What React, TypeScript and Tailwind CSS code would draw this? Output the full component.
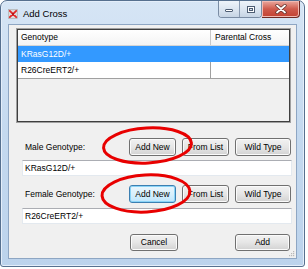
import React from "react";

const font = { fontFamily: '"Liberation Sans", Arial, sans-serif' };

function Btn({ label, w, focus = false }: { label: string; w: string; focus?: boolean }) {
  return (
    <div
      className={
        "flex items-center justify-center rounded-[3px] border text-[8.5px] text-black " +
        w +
        (focus
          ? " border-[#3c7fb1] bg-gradient-to-b from-[#eaf6fd] via-[#d9f0fc] to-[#bee6fd] shadow-[inset_0_0_0_1px_#8ad4f7]"
          : " border-[#707070] bg-gradient-to-b from-[#f2f2f2] via-[#e6e6e6] to-[#d2d2d2] shadow-[inset_0_0_0_1px_#fbfbfb]")
      }
    >
      {label}
    </div>
  );
}

function ButtonRow({ label }: { label: string }) {
  return (
    <div className="flex h-[18px] items-center pl-[16px] pr-[5px]">
      <div className="flex-1 text-[8.5px] text-black">{label}</div>
      <div className="flex gap-[6px] h-full">
        <Btn label="Add New" w="w-[47px]" focus={label.startsWith("Female")} />
        <Btn label="From List" w="w-[47px]" />
        <Btn label="Wild Type" w="w-[56px]" />
      </div>
    </div>
  );
}

function TextBox({ value }: { value: string }) {
  return (
    <div className="ml-[13px] flex h-[16px] w-[270px] items-center border border-[#e3e9ef] border-t-[#abadb3] bg-white pl-[2px] text-[8.5px] text-black">
      {value}
    </div>
  );
}

export default function App() {
  return (
    <div className="relative h-[269px] w-[308px] overflow-hidden bg-white" style={font}>
      <div className="flex h-[267px] w-[305px] flex-col rounded-t-[7px] rounded-b-[3px] border border-[#56708f] bg-gradient-to-b from-[#d6e5f5] via-[#c4d9ef] to-[#bcd3ec] shadow-[inset_0_0_0_1px_#e4eefa]">
        {/* title bar */}
        <div className="flex h-[23px] items-start justify-between">
          <div className="flex items-center gap-[5px] pl-[7px] pt-[6px]">
            <svg width="10" height="10" viewBox="0 0 10 10">
              <rect x="0.5" y="0.5" width="9" height="9" fill="#dcdcdc" stroke="#a8a8a8" strokeWidth="0.6" />
              <path d="M1.8 1.8 L8.2 8.2 M8.2 1.8 L1.8 8.2" stroke="#e02828" strokeWidth="1.8" strokeLinecap="round" />
              <circle cx="5" cy="5" r="1.1" fill="#b01010" />
            </svg>
            <span className="text-[9.5px] text-black">Add Cross</span>
          </div>
          <div className="flex pr-[4px]">
            <div className="flex h-[17px] overflow-hidden rounded-b-[4px] border border-t-0 border-[#7a8ca4] shadow-[inset_0_0_0_1px_#eef4fb]">
              <div className="flex w-[21px] items-end justify-center border-r border-[#8a9bb2] bg-gradient-to-b from-[#eef4fa] via-[#dce6f1] to-[#c6d4e4] pb-[5px]">
                <div className="h-[3px] w-[8px] rounded-[1px] border border-[#4d5d73] bg-white" />
              </div>
              <div className="flex w-[21px] items-center justify-center bg-gradient-to-b from-[#eef4fa] via-[#dce6f1] to-[#c6d4e4]">
                <div className="h-[7px] w-[8px] border border-[#4d5d73] bg-white">
                  <div className="mx-auto mt-[1px] h-[3px] w-[4px] border border-[#4d5d73] bg-[#d8e3ef]" />
                </div>
              </div>
            </div>
            <div className="flex h-[17px] w-[38px] items-center justify-center rounded-br-[4px] border border-l-0 border-t-0 border-[#6e2a24] bg-gradient-to-b from-[#e9a89f] via-[#cf5a4c] to-[#c24132] shadow-[inset_0_0_0_1px_#f2b9b1]">
              <svg width="12" height="10" viewBox="0 0 12 10">
                <path d="M2 1.5 L10 8.5 M10 1.5 L2 8.5" stroke="#5a2a25" strokeWidth="3.2" strokeLinecap="round" />
                <path d="M2 1.5 L10 8.5 M10 1.5 L2 8.5" stroke="#ffffff" strokeWidth="1.8" strokeLinecap="round" />
              </svg>
            </div>
          </div>
        </div>

        {/* client area */}
        <div className="relative mx-[7px] mb-[7px] flex flex-1 flex-col border border-[#8ea6c3] bg-[#f0f0f0]">
          {/* grid */}
          <div className="ml-[7px] mt-[3px] h-[95px] w-[275px] border border-[#a0a0a0]">
            <div className="flex h-full flex-col border border-[#3f3f3f] bg-[#f0f0f0]">
              <div className="flex h-[16px] border-b border-[#d5d5d5] bg-gradient-to-b from-white to-[#f4f4f4] text-[8.5px] text-black">
                <div className="flex w-[193px] items-center border-r border-[#c8c8c8] pl-[3px]">Genotype</div>
                <div className="flex flex-1 items-center pl-[4px]">Parental Cross</div>
              </div>
              <div className="flex h-[16px] bg-[#3399ff] text-[8.5px] text-white">
                <div className="flex w-[193px] items-center border-r border-[#3399ff] pl-[3px]">KRasG12D/+</div>
                <div className="flex-1" />
              </div>
              <div className="flex h-[17px] border-b border-[#a0a0a0] bg-white text-[8.5px] text-black">
                <div className="flex w-[193px] items-center border-r border-[#a0a0a0] pl-[3px]">R26CreERT2/+</div>
                <div className="flex-1" />
              </div>
            </div>
          </div>

          <div className="mt-[15px]">
            <ButtonRow label="Male Genotype:" />
          </div>
          <div className="mt-[4px]">
            <TextBox value="KRasG12D/+" />
          </div>
          <div className="mt-[9px]">
            <ButtonRow label="Female Genotype:" />
          </div>
          <div className="mt-[5px]">
            <TextBox value="R26CreERT2/+" />
          </div>
          <div className="mt-[10px] flex h-[17px] justify-end gap-[57px] pr-[6px]">
            <Btn label="Cancel" w="w-[48px]" />
            <Btn label="Add" w="w-[55px]" />
          </div>

          <svg className="absolute bottom-[1px] right-[1px]" width="8" height="8" viewBox="0 0 8 8">
            {[
              [6, 2],
              [6, 4],
              [4, 4],
              [6, 6],
              [4, 6],
              [2, 6],
            ].map(([x, y], i) => (
              <rect key={i} x={x} y={y} width="1.2" height="1.2" fill="#b8b8b8" />
            ))}
          </svg>
        </div>
      </div>

      {/* red annotation ellipses */}
      <svg className="pointer-events-none absolute left-0 top-0" width="308" height="269" viewBox="0 0 308 269">
        <ellipse cx="147.5" cy="145.5" rx="44" ry="17.5" fill="none" stroke="#e80000" strokeWidth="3" transform="rotate(-3 147.5 145.5)" />
        <ellipse cx="146" cy="193.5" rx="44" ry="18.5" fill="none" stroke="#e80000" strokeWidth="3" transform="rotate(-3 146 193.5)" />
      </svg>
    </div>
  );
}
